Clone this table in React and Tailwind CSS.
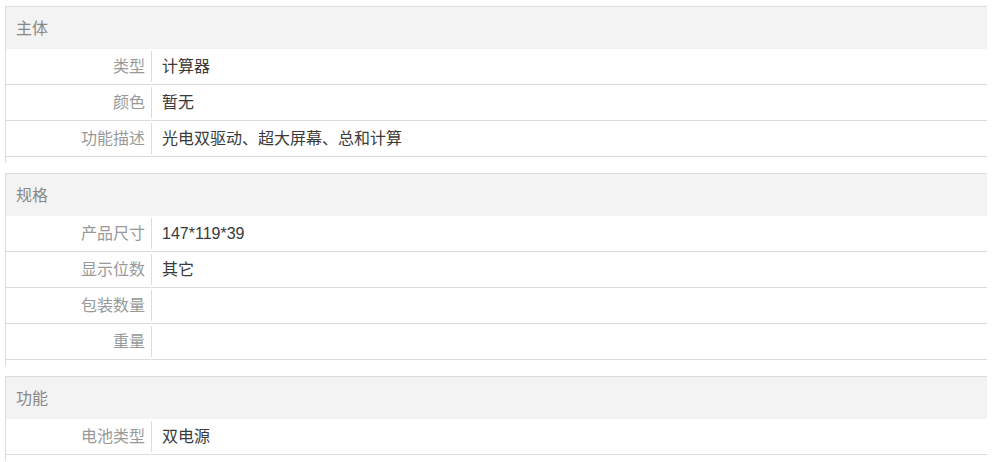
const sections = [
  {
    title: "主体",
    rows: [
      ["类型", "计算器"],
      ["颜色", "暂无"],
      ["功能描述", "光电双驱动、超大屏幕、总和计算"],
    ],
  },
  {
    title: "规格",
    rows: [
      ["产品尺寸", "147*119*39"],
      ["显示位数", "其它"],
      ["包装数量", ""],
      ["重量", ""],
    ],
  },
  {
    title: "功能",
    rows: [["电池类型", "双电源"]],
  },
];

export default function App() {
  return (
    <div
      className="w-[993px] h-[462px] overflow-hidden bg-white pt-[6px] pl-[5px] pr-[6px] text-[16px]"
      style={{ fontFamily: '"Liberation Sans", Arial, "Noto Sans CJK SC", sans-serif' }}
    >
      {sections.map((s) => (
        <div key={s.title} className="border-l border-t border-[#dcdcdc] pb-[6px] mb-[10px]">
          {/* Section header */}
          <div className="h-[42px] bg-[#f3f3f3] flex items-center pl-[10px] pt-[1px] text-[#888]">
            {s.title}
          </div>

          {/* Rows */}
          {s.rows.map(([label, value]) => (
            <div key={label} className="flex h-[36px] border-b border-[#dcdcdc]">
              <div className="w-[146px] shrink-0 flex items-center justify-end pr-[6px] my-[2px] border-r border-[#dcdcdc] text-[#999]">
                {label}
              </div>
              <div className="flex items-center pl-[10px] text-[#3a3a3a]">{value}</div>
            </div>
          ))}
        </div>
      ))}
    </div>
  );
}
